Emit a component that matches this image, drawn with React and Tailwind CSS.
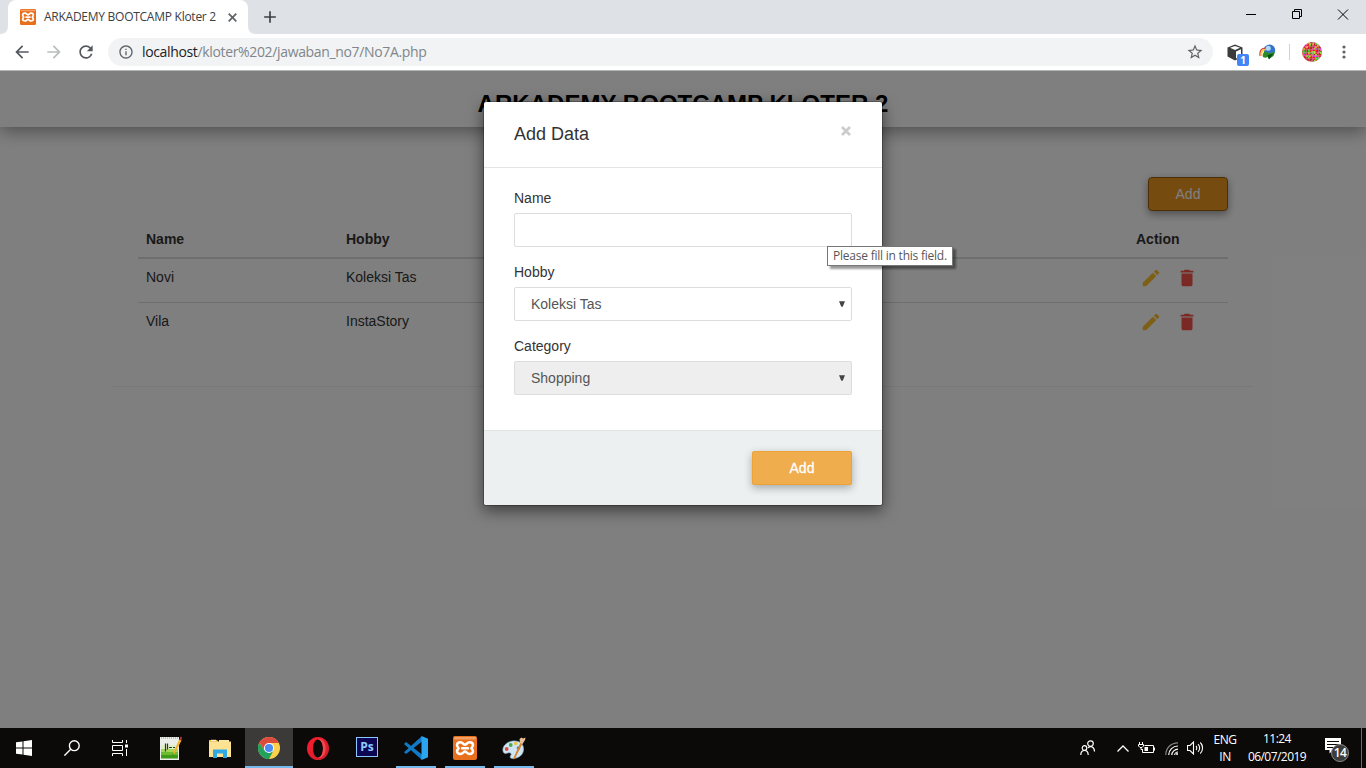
import React from "react";
import { MdArrowBack, MdArrowForward, MdRefresh, MdInfoOutline, MdStarBorder, MdEdit, MdDelete, MdAdd } from "react-icons/md";

const SYSTEM = "font-['Open_Sans','Noto_Sans',sans-serif]";

function XamppIcon({ size }) {
  return (
    <svg width={size} height={size} viewBox="0 0 24 24" className="block shrink-0">
      <rect width="24" height="24" rx="2" fill="#e8701c" />
      <rect x="1" y="1" width="22" height="2.500" rx="1" fill="#f3a065" />
      <path
        d="M12 8.800C10.500 8.800 9.800 6.300 7.500 6.300 5 6.300 4 7.800 4 9.300c0 1.600 1.500 1.900 1.500 2.900S4 13.500 4 15.100c0 1.600 1 2.900 3.500 2.900 2.300 0 3-2.500 4.500-2.500s2.200 2.500 4.500 2.500c2.500 0 3.500-1.300 3.500-2.900 0-1.600-1.500-1.900-1.500-2.900S20 10.900 20 9.300c0-1.500-1-3-3.500-3-2.300 0-3 2.500-4.500 2.500zM9 12.200h6"
        fill="none"
        stroke="#fff"
        strokeWidth="2.500"
        strokeLinecap="round"
        strokeLinejoin="round"
      />
    </svg>
  );
}

const AVATAR_COLORS = ["#e8252a", "#39d02f", "#d92be0", "#f4a11a", "#d9183c", "#8f3a2a", "#9be72d", "#e84d9c", "#b4281d", "#f02a1a", "#4fa02f"];

function Avatar() {
  const cells = [];
  let seed = 17;
  for (let y = 0; y < 14; y++) {
    for (let x = 0; x < 14; x++) {
      seed = (seed * 1103515 + 12345) % 1000003;
      cells.push(
        <rect key={`${x}-${y}`} x={x * 1.5} y={y * 1.5} width="1.6" height="1.6" fill={AVATAR_COLORS[seed % AVATAR_COLORS.length]} />
      );
    }
  }
  return (
    <svg width="20" height="20" viewBox="0 0 20 20" className="block rounded-full">
      {cells}
    </svg>
  );
}

function TabStrip() {
  return (
    <div className="flex h-[34px] bg-[#dee1e6]">
      <svg width="8" height="34" viewBox="0 0 8 34" className="shrink-0">
        <path d="M8 26v8H0c5 0 8-3 8-8z" fill="#fff" />
      </svg>
      <div className="flex w-60 shrink-0 items-center rounded-t-lg bg-white pl-3">
        <XamppIcon size={16} />
        <span className={`ml-2 w-[180px] whitespace-nowrap text-[12px] leading-4 tracking-[-0.26px] text-[#3c4043] ${SYSTEM}`}>
          ARKADEMY BOOTCAMP Kloter 2
        </span>
        <svg width="9" height="9" viewBox="0 0 9 9" className="ml-[3.500px]" fill="none" stroke="#5f6368" strokeWidth="1.700">
          <path d="M.7.7l7.600 7.600M8.300.7L.7 8.300" />
        </svg>
      </div>
      <svg width="8" height="34" viewBox="0 0 8 34" className="shrink-0">
        <path d="M0 26v8h8c-5 0-8-3-8-8z" fill="#fff" />
      </svg>
      <div className="flex items-center pl-1">
        <MdAdd size={20} className="text-[#3c4043]" />
      </div>
      <div className="ml-auto flex pt-[9px] text-black">
        <svg width="46" height="11" viewBox="0 0 46 11" fill="none" stroke="currentColor">
          <path d="M18 5.500h10" />
        </svg>
        <svg width="46" height="11" viewBox="0 0 46 11" fill="none" stroke="currentColor">
          <path d="M18.500 2.500h7v7h-7zM20.500 2.500v-2h7v7h-2" />
        </svg>
        <svg width="46" height="11" viewBox="0 0 46 11" fill="none" stroke="currentColor">
          <path d="M18 .5l10 10M28 .5l-10 10" />
        </svg>
      </div>
    </div>
  );
}

function Toolbar() {
  return (
    <div className="flex h-[37px] items-center border-b border-[#b3b5b5] bg-white pl-3">
      <MdArrowBack size={20} className="text-[#54585d]" />
      <MdArrowForward size={20} className="ml-3 text-[#babcbe]" />
      <MdRefresh size={20} className="ml-3 text-[#54585d]" />
      <div className="ml-3 flex h-7 w-[1105px] items-center rounded-full bg-[#f1f3f4] pl-2.5 pr-[9px]">
        <MdInfoOutline size={16} className="text-[#5f6368]" />
        <span className={`ml-2 whitespace-nowrap text-[14px] leading-5 tracking-[-0.35px] text-[#80868b] ${SYSTEM}`}>
          <span className="text-[#202124]">localhost</span>/kloter%202/jawaban_no7/No7A.php
        </span>
        <MdStarBorder size={18} className="ml-auto text-[#5f6368]" />
      </div>
      <div className="relative ml-3.5 h-[17px] w-4">
        <svg width="16" height="17" viewBox="0 0 16 17">
          <path d="M8 .5l7.500 3v9L8 16.500l-7.500-4v-9z" fill="#3b3b3b" />
          <path d="M8 2l5 1.800L8 6 3 3.800z" fill="#fff" />
          <path d="M9 7.500l5-2.200v6.500l-5 2.700z" fill="#fff" />
        </svg>
        <span className="absolute left-2.5 top-2.5 flex h-3 w-3 items-center justify-center rounded-[2px] bg-[#4285f4] font-['Open_Sans',sans-serif] text-[10px] font-bold leading-3 text-white">
          1
        </span>
      </div>
      <svg width="17" height="16" viewBox="0 0 17 16" className="ml-4">
        <circle cx="10.500" cy="6.200" r="5.700" fill="#3473c8" />
        <circle cx="9.300" cy="4.200" r="2.500" fill="#b3d8f6" />
        <path d="M1.200 12C0 6.500 3 4 6.500 4" fill="none" stroke="#d9362b" strokeWidth="1.200" />
        <path d="M2.500 12C1.600 8 4 5.500 7 5.500" fill="none" stroke="#f2d02c" strokeWidth="1.700" />
        <path d="M4 13c-1-3 1-5.500 3-6 .5 2 3 3 5.500 1.500l3.500-.5-1.500 4-4.500 3-1.500-2c-1.500 1-3 1-4.500 0z" fill="#2d8d25" />
        <path d="M8.500 11l6-1.500-4.500 6z" fill="#0c4f13" />
      </svg>
      <div className="ml-[13px] h-4 w-px bg-[#d0d2d5]" />
      <div className="ml-3">
        <Avatar />
      </div>
      <svg width="4" height="14" viewBox="0 0 4 14" className="ml-5" fill="#5f6368">
        <circle cx="2" cy="2" r="1.600" />
        <circle cx="2" cy="7" r="1.600" />
        <circle cx="2" cy="12" r="1.600" />
      </svg>
    </div>
  );
}

const PEOPLE = [
  { name: "Novi", hobby: "Koleksi Tas" },
  { name: "Vila", hobby: "InstaStory" },
];

function Page() {
  return (
    <div className="h-full bg-white">
      <header className="h-14 pt-[19px] text-center shadow-[0_4px_18px_rgba(0,0,0,0.4)]">
        <h1 className="text-[24px] font-bold leading-[27px] tracking-[0.04px] text-black">ARKADEMY BOOTCAMP KLOTER 2</h1>
      </header>
      <main className="mx-auto h-[260px] w-[1140px] border-b border-[#f0f0f0] px-[25px] pt-[50px]">
        <div className="flex justify-end">
          <button className="h-[34px] w-20 rounded border border-[#985f0d] bg-[#ec971f] text-white shadow-[0_3px_8px_rgba(0,0,0,0.4)]">
            Add
          </button>
        </div>
        <div className="mt-2.5 grid grid-cols-[200px_790px_100px] border-b-2 border-[#ddd] pb-2 pt-2 font-bold">
          <span className="pl-2">Name</span>
          <span className="pl-2">Hobby</span>
          <span className="pl-2">Action</span>
        </div>
        {PEOPLE.map((p) => (
          <div key={p.name} className="grid h-11 grid-cols-[200px_790px_100px] border-b border-[#ddd] pt-2 last:border-b-0">
            <span className="pl-2">{p.name}</span>
            <span className="pl-2">{p.hobby}</span>
            <span className="flex gap-3.5 pl-3">
              <MdEdit size={22} className="text-[#fbc02d]" />
              <MdDelete size={22} className="text-[#f4524b]" />
            </span>
          </div>
        ))}
      </main>
    </div>
  );
}

function SelectBox({ value, disabled }) {
  return (
    <div
      className={`flex h-[34px] items-center justify-between rounded-[2px] border border-[#ddd] pl-4 pr-[6px] text-[#555] ${
        disabled ? "bg-[#eee]" : "bg-white"
      }`}
    >
      <span>{value}</span>
      <svg width="6" height="6" viewBox="0 0 6 6" className="block">
        <path d="M0 .3h6L3.700 5.700H2.300z" fill="#444" />
      </svg>
    </div>
  );
}

function Modal() {
  return (
    <div className="w-[400px] rounded-[3px] border border-black/25 bg-clip-padding bg-white shadow-[0_5px_15px_rgba(0,0,0,0.5)]">
      <div className="flex h-[66px] justify-between border-b border-[#e5e5e5] pl-[30px] pr-[31px] pt-5">
        <h4 className="text-[18px] leading-6">Add Data</h4>
        <svg width="10" height="10" viewBox="0 0 10 10" className="mt-1" fill="none" stroke="#ccc" strokeWidth="2.700">
          <path d="M1 1l8 8M9 1L1 9" />
        </svg>
      </div>
      <div className="h-[262px] px-[30px] pt-5">
        <div className="mb-[5px]">Name</div>
        <div className="mb-[15px] h-[34px] rounded-[2px] border border-[#ddd] bg-white" />
        <div className="mb-[5px]">Hobby</div>
        <SelectBox value="Koleksi Tas" />
        <div className="mb-[5px] mt-[15px]">Category</div>
        <SelectBox value="Shopping" disabled />
      </div>
      <div className="flex h-[75px] justify-end rounded-b-[3px] border-t border-[#e0e4e5] bg-[#ecf0f1] px-[30px] pt-5">
        <button className="h-[34px] w-[100px] rounded-[2px] border border-[#eea236] bg-[#f0ad4e] text-white shadow-[0_3px_8px_rgba(0,0,0,0.3)] [-webkit-text-stroke:0.3px_white]">
          Add
        </button>
      </div>
    </div>
  );
}

function NotepadIcon() {
  return (
    <svg width="22" height="24" viewBox="0 0 22 24">
      <rect x="0" y="1" width="19" height="23" fill="#eceee9" />
      <path d="M1 9h17v5H1z" fill="#dff0c4" />
      <path d="M1 13h17v3H1z" fill="#a5d65c" />
      <path d="M1 16h17v3H1z" fill="#6cbc31" />
      <path d="M1 19h17v3.500H1z" fill="#3f9a1a" />
      <path d="M1 2h17" stroke="#999" strokeDasharray="1 1" />
      <path d="M5.500 7.500v8M7.500 7.500v6M9 11.500h3M13 11.500h2" stroke="#333" strokeWidth="1.200" />
      <path d="M19.200 3.500L13.500 16l-1 3 2.500-2L21.500 4.500z" fill="#f3b229" />
      <path d="M19.200 3.500l1.300-3 1.500.8-.7 3.200z" fill="#a63b35" />
      <path d="M12.500 19l.3-1.500 1 .6z" fill="#333" />
    </svg>
  );
}

function FolderIcon() {
  return (
    <svg width="22" height="19" viewBox="0 0 22 19">
      <path d="M0 1h8l1.500 2H0z" fill="#e8b63a" />
      <path d="M10 1h10v2H10z" fill="#fbe7a0" />
      <path d="M0 2.500h22V18H0z" fill="#fde292" />
      <path d="M2 1.300h5" stroke="#fff" />
      <path d="M4 10.500h14V19h-4v-4.500H8V19H4z" fill="#2fa9e6" />
    </svg>
  );
}

function ChromeIcon() {
  return (
    <svg width="22" height="22" viewBox="0 0 22 22">
      <circle cx="11" cy="11" r="11" fill="#fdd04b" />
      <path d="M1.470 5.500A11 11 0 0 0 11 22l4.500-8.500L6 13z" fill="#24a05f" />
      <path d="M1.470 5.500L6.500 13.500 11 6h9.800A11 11 0 0 0 1.470 5.500z" fill="#dd4b3e" />
      <circle cx="11" cy="11" r="5.100" fill="#fff" />
      <circle cx="11" cy="11" r="4.100" fill="#4b8bf4" />
    </svg>
  );
}

function OperaIcon() {
  return (
    <svg width="22" height="23" viewBox="0 0 23 23" preserveAspectRatio="none">
      <defs>
        <linearGradient id="operaFill" x1="0" y1="0" x2="1" y2="1">
          <stop offset="0" stopColor="#ff1b2d" />
          <stop offset="1" stopColor="#c8202c" />
        </linearGradient>
      </defs>
      <path
        fillRule="evenodd"
        fill="url(#operaFill)"
        d="M11.500 0a11.500 11.500 0 1 0 0 23 11.500 11.500 0 1 0 0-23zM11.500 2.500c3 0 5.200 4 5.200 9s-2.200 9-5.200 9-5.200-4-5.200-9 2.200-9 5.200-9z"
      />
      <path d="M11.500 2.500c3.500-1.700 8 2.500 8 9s-4.500 10.700-8 9c3 0 5.200-4 5.200-9s-2.200-9-5.200-9z" fill="#f5484f" />
    </svg>
  );
}

function PhotoshopIcon() {
  return (
    <span className="mb-0.5 flex h-5 w-[22px] items-center justify-center border border-[#8cc6ff] bg-[#0c0653] font-['Open_Sans',sans-serif] text-[12px] font-bold leading-none text-[#8fcaff]">
      Ps
    </span>
  );
}

function VsCodeIcon() {
  return (
    <svg width="24" height="24" viewBox="0 0 24 24">
      <path d="M0 8l2-2 16 12.500V24z" fill="#0f7bc4" />
      <path d="M0 16.200l2 1.900L18 5.500V0z" fill="#1379c4" />
      <path d="M17.500 0L24 2.800v18.400L17.500 24z" fill="#2ba5f0" />
    </svg>
  );
}

function PaintIcon() {
  return (
    <svg width="24" height="24" viewBox="0 0 24 24">
      <path d="M1 15C0 9 7 4.500 13 5c6 .4 8.500 4 8.500 8 0 6-5 9.500-11 9.500-3 0-2.500-2-1.500-3.500S8 16 5.500 17 1.300 17 1 15z" fill="#cfe5f3" stroke="#91b8d0" strokeWidth=".7" />
      <circle cx="4.700" cy="13" r="1.900" fill="#df4841" />
      <circle cx="8.700" cy="9" r="1.900" fill="#47a947" />
      <circle cx="13.700" cy="7.500" r="1.800" fill="#efc53a" />
      <circle cx="16.500" cy="12" r="1.800" fill="#3f7ed0" />
      <path d="M18.500 6.500l2 1L13 22.500l-1.500 1 .2-2z" fill="#d98328" />
      <path d="M18 7l-.5-4 2-1.500 1.500 1L23.500 1.500 23 4l-2.500 4z" fill="#e7c194" />
    </svg>
  );
}

const APPS = [
  { id: "notepad", icon: <NotepadIcon /> },
  { id: "explorer", icon: <FolderIcon /> },
  { id: "chrome", icon: <ChromeIcon />, active: true },
  { id: "opera", icon: <OperaIcon /> },
  { id: "photoshop", icon: <PhotoshopIcon /> },
  { id: "vscode", icon: <VsCodeIcon />, open: true },
  { id: "xampp", icon: <XamppIcon size={24} />, open: true },
  { id: "paint", icon: <PaintIcon />, open: true },
];

function Taskbar() {
  return (
    <footer className={`flex h-10 bg-[#0b0a09] text-white ${SYSTEM}`}>
      <div className="flex w-12 items-center justify-center">
        <svg width="16" height="16" viewBox="0 0 16 16" fill="#fff">
          <path d="M0 2.300l6.500-.9v6.100H0zM7.500 1.200L16 0v7.500H7.500zM0 8.500h6.500v6.100L0 13.700zM7.500 8.500H16V16l-8.500-1.200z" />
        </svg>
      </div>
      <div className="flex w-12 items-center justify-center">
        <svg width="16" height="16" viewBox="0 0 16 16" fill="none" stroke="#fff" strokeWidth="1.400">
          <circle cx="10.300" cy="5.700" r="4.900" />
          <path d="M6.700 9.300L.4 15.600" />
        </svg>
      </div>
      <div className="flex w-12 items-center justify-center">
        <svg width="16" height="16" viewBox="0 0 16 16" fill="none" stroke="#fff">
          <path d="M.5 0v2.500h10V0M.5 16v-2.500h10V16M.5 5.500h10v5H.5zM14.500 0v3M14.500 9v7" />
          <path d="M13 4.500h3v3h-3z" fill="#fff" stroke="none" />
        </svg>
      </div>
      <div className="ml-[3px] flex gap-px">
        {APPS.map((app) => (
          <div key={app.id} className={`flex w-12 flex-col items-center ${app.active ? "bg-[#3b3a39]" : ""}`}>
            <div className="flex h-[38px] items-center justify-center pt-0.5">{app.icon}</div>
            {app.active && <div className="h-0.5 w-12 bg-[#76b9ed]" />}
            {app.open && <div className="h-0.5 w-10 bg-[#76b9ed]" />}
          </div>
        ))}
      </div>
      <div className="ml-auto flex items-center">
        <svg width="16" height="16" viewBox="0 0 16 16" fill="none" stroke="#fff" strokeWidth="1.200" className="mr-[21px]">
          <circle cx="10.500" cy="3.600" r="2.800" />
          <circle cx="4.500" cy="8" r="2.300" />
          <path d="M.8 15c0-6 7.400-6 7.400 0M8 7.800c2.500-2.500 6.500-1 6.500 3.700" />
        </svg>
        <svg width="12" height="7" viewBox="0 0 12 7" fill="none" stroke="#fff" strokeWidth="1.300" className="mr-[9px]">
          <path d="M.5 6.500L6 1l5.500 5.500" />
        </svg>
        <svg width="17" height="14" viewBox="0 0 17 14" fill="none" stroke="#fff" className="mr-2.5">
          <path d="M6.500 4.500h9v7h-11v-3" />
          <path d="M16 6.500h1v3h-1zM6.500 6H10v4H6.500z" fill="#fff" stroke="none" />
          <path d="M1.500 1v2M4.500 1v2M.5 3.500h5v1.500l-1.500 1.500H2L.5 5zM3 6.500v2h2" />
        </svg>
        <svg width="13" height="13" viewBox="0 0 13 13" fill="none" stroke="#fff" strokeWidth="1.200" className="mr-[9px]">
          <path d="M.8 13C.8 6 6 .8 13 .8" opacity=".5" />
          <path d="M3.700 13C3.700 8 8 4 13 4" />
          <path d="M6.800 13c0-3.200 3-5.800 6.200-5.800M9.700 13c0-1.600 1.700-3 3.300-3" />
          <circle cx="12" cy="12" r="1" fill="#fff" stroke="none" />
        </svg>
        <svg width="17" height="14" viewBox="0 0 17 14" fill="none" stroke="#fff" strokeWidth="1.100" className="mr-[9px]">
          <path d="M.5 4.500H3L6.500 1v12L3 9.500H.5z" />
          <path d="M9 5c1 1 1 3 0 4M11 3.200c2.200 2 2.200 5.600 0 7.600M13.300 1.500c3 3 3 8 0 11" />
        </svg>
        <div className="w-6 text-center text-[12px] leading-[17px] tracking-[-0.4px]">
          <div>ENG</div>
          <div>IN</div>
        </div>
        <div className="ml-[9px] mr-px w-[62px] text-center text-[12px] leading-[17px] tracking-[-0.55px] -mt-0.5">
          <div>11:24</div>
          <div className="mt-px">06/07/2019</div>
        </div>
        <div className="relative ml-4 h-5 w-[26px]">
          <svg width="17" height="16" viewBox="0 0 17 16">
            <path d="M0 0h16v12H8l-3.500 3.500V12H0z" fill="#fff" />
            <path d="M2 3.500h12M2 6.500h12M2 9.500h9" stroke="#0b0a09" />
          </svg>
          <span className="absolute left-[6px] top-[6px] flex h-[18px] w-[18px] items-center justify-center rounded-full border border-[#8a8a8a] bg-[#3c3c3c] text-[12px] font-semibold leading-none tracking-[-0.5px]">
            14
          </span>
        </div>
        <div className="ml-2.5 h-10 w-[5px] border-l border-[#6a6a6a]" />
      </div>
    </footer>
  );
}

export default function App() {
  return (
    <div className="flex h-[768px] w-[1366px] flex-col overflow-hidden font-['Liberation_Sans',Arial,sans-serif] text-[14px] leading-5 text-[#333]">
      <TabStrip />
      <Toolbar />
      <div className="relative h-[657px] overflow-hidden">
        <Page />
        <div className="absolute inset-0 flex items-start justify-center bg-black/50 pt-[30px]">
          <Modal />
        </div>
        <div
          className={`absolute left-[827px] top-[175px] flex h-5 w-[126px] items-center justify-center whitespace-nowrap border border-[#767676] bg-white text-[12px] leading-4 tracking-[-0.23px] text-[#575757] shadow-[3px_3px_2px_rgba(0,0,0,0.4)] ${SYSTEM}`}
        >
          Please fill in this field.
        </div>
      </div>
      <Taskbar />
    </div>
  );
}
